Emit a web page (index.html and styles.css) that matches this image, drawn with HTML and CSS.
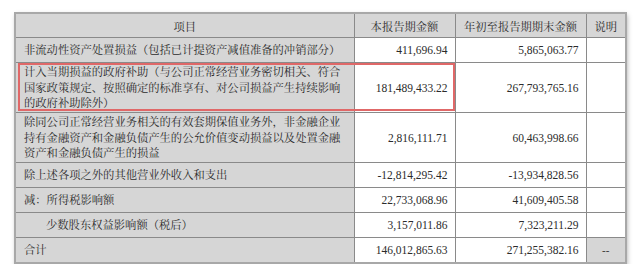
FILE: index.html
```html
<!DOCTYPE html>
<html lang="zh">
<head>
<meta charset="utf-8">
<title>非经常性损益</title>
<link rel="stylesheet" href="styles.css">
</head>
<body>
<div class="frame">
  <table class="report">
    <colgroup>
      <col class="c-item"><col class="c-cur"><col class="c-ytd"><col class="c-note">
    </colgroup>
    <thead>
      <tr class="r-head">
        <th>项目</th>
        <th>本报告期金额</th>
        <th>年初至报告期期末金额</th>
        <th>说明</th>
      </tr>
    </thead>
    <tbody>
      <tr class="r-1">
        <td class="item">非流动性资产处置损益（包括已计提资产减值准备的冲销部分）</td>
        <td class="num">411,696.94</td>
        <td class="num">5,865,063.77</td>
        <td class="note"></td>
      </tr>
      <tr class="r-3">
        <td class="item">计入当期损益的政府补助（与公司正常经营业务密切相关、符合<br>国家政策规定、按照确定的标准享有、对公司损益产生持续影响<br>的政府补助除外）</td>
        <td class="num">181,489,433.22</td>
        <td class="num">267,793,765.16</td>
        <td class="note"></td>
      </tr>
      <tr class="r-3">
        <td class="item">除同公司正常经营业务相关的有效套期保值业务外，非金融企业<br>持有金融资产和金融负债产生的公允价值变动损益以及处置金融<br>资产和金融负债产生的损益</td>
        <td class="num">2,816,111.71</td>
        <td class="num">60,463,998.66</td>
        <td class="note"></td>
      </tr>
      <tr class="r-1">
        <td class="item">除上述各项之外的其他营业外收入和支出</td>
        <td class="num">-12,814,295.42</td>
        <td class="num">-13,934,828.56</td>
        <td class="note"></td>
      </tr>
      <tr class="r-1">
        <td class="item">减：所得税影响额</td>
        <td class="num">22,733,068.96</td>
        <td class="num">41,609,405.58</td>
        <td class="note"></td>
      </tr>
      <tr class="r-1">
        <td class="item indent">少数股东权益影响额（税后）</td>
        <td class="num">3,157,011.86</td>
        <td class="num">7,323,211.29</td>
        <td class="note"></td>
      </tr>
      <tr class="r-1">
        <td class="item">合计</td>
        <td class="num">146,012,865.63</td>
        <td class="num">271,255,382.16</td>
        <td class="note grey">--</td>
      </tr>
    </tbody>
  </table>
  <div class="highlight"></div>
</div>
</body>
</html>
```
FILE: styles.css
```css
html, body {
  margin: 0;
  padding: 0;
  background: #ffffff;
}

body {
  padding: 12px 0 0 14px;
  font-family: "Noto Serif CJK SC", "Liberation Serif", "Noto Sans CJK SC", serif;
  color: #2b2b2b;
}

.frame {
  position: relative;
  width: 611px;
  box-shadow: 2px 3px 5px rgba(0, 0, 0, 0.35);
}

.report {
  width: 611px;
  border-collapse: collapse;
  table-layout: fixed;
  border: 2px solid #a8a8a8;
}

.c-item { width: 339px; }
.c-cur { width: 101px; }
.c-ytd { width: 131px; }
.c-note { width: 40px; }

.report th,
.report td {
  border: 1px solid #8a8a8a;
  padding: 0;
  vertical-align: middle;
}

.report th {
  background: #d6d6d6;
  font-weight: normal;
  font-size: 11.3px;
  text-align: center;
  height: 23px;
}

.r-1 td { height: 24px; }
.r-3 td { height: 49px; }

.item {
  background: #d6d6d6;
  font-size: 11.3px;
  line-height: 15.5px;
  padding: 0 0 0 8px !important;
  text-align: left;
  white-space: nowrap;
}

.indent {
  padding-left: 30px !important;
}

.num {
  background: #ffffff;
  font-family: "Liberation Serif", serif;
  font-size: 11.5px;
  text-align: right;
  padding-right: 7px !important;
}

.note {
  background: #ffffff;
  text-align: center;
  font-family: "Liberation Serif", serif;
  font-size: 11px;
}

.note.grey {
  background: #d6d6d6;
}

.highlight {
  position: absolute;
  left: 4px;
  top: 51px;
  width: 437px;
  height: 48px;
  box-sizing: border-box;
  border: 2px solid #e06868;
  pointer-events: none;
}
```
